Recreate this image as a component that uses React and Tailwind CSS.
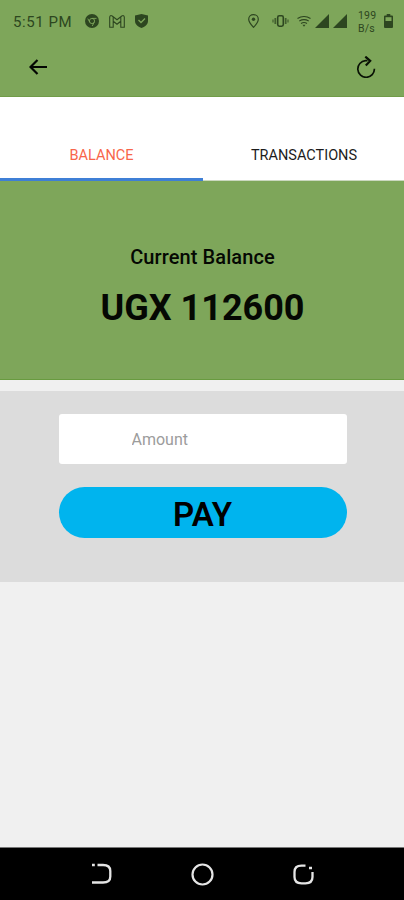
import React from 'react';

function StatusBar() {
  return (
    <div className="flex h-[42px] items-center text-[#2d4620]">
      <span className="ml-[13px] w-[60px] whitespace-nowrap pt-px text-[15px] leading-5 tracking-[0.55px]">5:51 PM</span>
      <svg className="ml-[12px] h-[14px] w-[14px] shrink-0" viewBox="0 0 14 14">
        <circle cx="7" cy="7" r="7" fill="currentColor" />
        <g fill="none" stroke="#7ea65a" strokeWidth="0.9">
          <circle cx="7" cy="7" r="2.6" />
          <path d="M7 4.4h4.5M4.8 8.3 2.8 4.6M9.2 8.3 7.2 12" />
        </g>
      </svg>
      <svg className="ml-[10px] h-[13px] w-[16px] shrink-0" viewBox="0 0 16 13" fill="none" stroke="currentColor" strokeWidth="1.1">
        <path d="M.7 12.3V2Q1.2-.2 3.2 1L8 4.8 12.8 1Q14.8-.2 15.3 2v10.3h-3.5V6.2L8 9.2 4.2 6.2v6.1ZM4.2 6.2V2M11.8 6.2V2" />
      </svg>
      <svg className="ml-[10px] h-[14px] w-[13px] shrink-0" viewBox="0 0 13 14">
        <path d="M6.5 0 13 1.6V7c0 3.5-3.4 6-6.5 7C3.4 13 0 10.5 0 7V1.6Z" fill="currentColor" />
        <path d="m3.5 6 2.5 2.5 4-4" fill="none" stroke="#7ea65a" strokeWidth="1.3" />
      </svg>
      <svg className="ml-[100px] h-[14px] w-[11px] shrink-0" viewBox="0 0 11 14">
        <path d="M5.5.7C2.7.7.7 2.7.7 5.3c0 3.2 4.8 8 4.8 8s4.8-4.8 4.8-8C10.3 2.7 8.3.7 5.5.7Z" fill="none" stroke="currentColor" strokeWidth="1.2" />
        <circle cx="5.5" cy="5.3" r="1.7" fill="currentColor" />
      </svg>
      <svg className="ml-[13px] h-[12px] w-[17px] shrink-0" viewBox="0 0 17 12" fill="none" stroke="currentColor">
        <rect x="5.7" y=".8" width="5.6" height="10.4" rx="1.6" strokeWidth="1.6" />
        <path d="M3.3 3v6M13.7 3v6" strokeWidth="1.7" opacity=".75" />
        <path d="M1 4.5v3M16 4.5v3" strokeWidth="1.5" opacity=".6" />
      </svg>
      <svg className="ml-[8px] h-[11px] w-[14px] shrink-0" viewBox="0 0 14 11" fill="none" stroke="currentColor" strokeWidth="1.1">
        <path d="M.5 2.5Q7-1.4 13.5 2.5M2.3 5Q7 2.3 11.7 5M4 7.4Q7 5.7 10 7.4" />
        <path d="m5.5 8.8 1.5 2 1.5-2Z" fill="currentColor" stroke="none" />
      </svg>
      <svg className="ml-[4px] h-[14px] w-[14px] shrink-0" viewBox="0 0 14 14"><path d="M14 0v14H0Z" fill="currentColor" /></svg>
      <svg className="ml-[4px] h-[14px] w-[14px] shrink-0" viewBox="0 0 14 14"><path d="M14 0v14H0Z" fill="currentColor" /></svg>
      <div className="ml-[11px] w-[20px] whitespace-nowrap pt-px text-[10.5px] leading-[13px] tracking-[0.2px]">
        <div>199</div>
        <div>B/s</div>
      </div>
      <svg className="ml-[6px] h-[14px] w-[9px] shrink-0" viewBox="0 0 9 14">
        <path d="M2.7 0h3.6v1.5H8q1 0 1 1V13q0 1-1 1H1q-1 0-1-1V2.5q0-1 1-1h1.7Z" fill="currentColor" />
        <path d="M1.5 3.2h6V7h-6Z" fill="#7ea65a" />
      </svg>
    </div>
  );
}

function Toolbar() {
  return (
    <div className="flex h-[55px] items-start justify-between pl-[29px] pr-[28px]">
      <svg className="mt-[17px] h-4 w-[18px]" viewBox="0 0 18 16" fill="none" stroke="#030602" strokeWidth="2.2">
        <path d="M18 8H2M8.5 1 1.5 8l7 7" />
      </svg>
      <svg className="mt-[14px] h-[22px] w-5" viewBox="0 0 20 22" fill="none" stroke="#0a1205" strokeWidth="1.7">
        <path d="M11.5 4.7H9.5A8.3 8.3 0 1 0 18.4 12.7" />
        <path d="M9.3.6 14.2 4.9 9.8 9.5" strokeWidth="2.2" />
      </svg>
    </div>
  );
}

function Tabs() {
  return (
    <div className="flex h-[84px] bg-white text-[14.5px] leading-5">
      <button className="flex w-[203px] items-end justify-center border-b-[3px] border-[#3f7fd6] pb-[12px] text-[#f8654a]">BALANCE</button>
      <button className="flex flex-1 items-end justify-center border-b border-[#cbd8bf] pb-[14px] pl-px text-[#1c1c1c]">TRANSACTIONS</button>
    </div>
  );
}

export default function App() {
  return (
    <div className="flex h-[900px] w-[404px] flex-col overflow-hidden bg-[#f0f0f0] font-[Roboto,sans-serif]">
      <header className="h-[97px] shrink-0 border-b border-[#719c49] bg-[#7ea65a]">
        <StatusBar />
        <Toolbar />
      </header>
      <Tabs />
      <section className="flex h-[199px] flex-col items-center border-b border-[#689b3f] bg-[#7ea65a] pl-px pt-[64px] text-[#050803]">
        <h2 className="text-[20px] font-medium leading-6 tracking-[0.1px]">Current Balance</h2>
        <p className="mt-[17px] text-[36px] font-bold leading-[44px]">UGX 112600</p>
      </section>
      <section className="mt-[11px] flex h-[191px] flex-col items-center bg-[#dcdcdc] pl-px pt-[23px]">
        <input
          className="h-[50px] w-[288px] rounded-[3px] bg-white pl-[73px] text-[16px] outline-none placeholder:text-[#9c9c9c]"
          placeholder="Amount"
        />
        <button className="mt-[23px] h-[51px] w-[288px] rounded-full bg-[#00b4ee] pt-[4px] text-[33px] font-semibold leading-[47px] text-black">PAY</button>
      </section>
      <nav className="mt-auto flex h-[53px] items-center border-t border-[#777] bg-black pl-[91px] text-[#e5e5e5]">
        <svg className="h-[22px] w-[21px]" viewBox="0 0 21 22" fill="none" stroke="currentColor" strokeWidth="2.3">
          <path d="M1 2h2.800M6.500 2H12Q19.300 2 19.300 8V13.500Q19.300 19.500 12 19.500H1" />
        </svg>
        <svg className="ml-[79px] h-[23px] w-[23px]" viewBox="0 0 23 23" fill="none" stroke="currentColor" strokeWidth="2.2">
          <circle cx="11.5" cy="11.5" r="10" />
        </svg>
        <svg className="ml-[79px] h-[21px] w-[21px]" viewBox="0 0 21 21" fill="none" stroke="currentColor" strokeWidth="2.3">
          <path d="M12.500 1.700H8.500Q1.500 1.700 1.500 8V13Q1.500 19.300 8.500 19.300H12.500Q19.500 19.300 19.500 13V8M16 4h3" />
        </svg>
      </nav>
    </div>
  );
}
